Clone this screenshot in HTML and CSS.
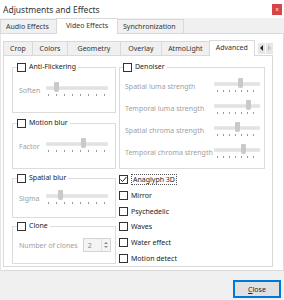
FILE: index.html
```html
<!DOCTYPE html>
<html lang="en">
<head>
<meta charset="UTF-8">
<title>Adjustments and Effects</title>
<link rel="stylesheet" href="styles.css">
</head>
<body>
  <div class="window">
    <div class="titlebar">
      <span class="title">Adjustments and Effects</span>
      <span class="close-x">x</span>
    </div>

    <div class="tabs outer-tabs">
      <span class="tab">Audio Effects</span>
      <span class="tab active">Video Effects</span>
      <span class="tab">Synchronization</span>
    </div>

    <div class="outer-pane">
      <div class="tabs inner-tabs">
        <span class="tab">Crop</span>
        <span class="tab">Colors</span>
        <span class="tab">Geometry</span>
        <span class="tab">Overlay</span>
        <span class="tab">AtmoLight</span>
        <span class="tab active">Advanced</span>
        <span class="scroll-btns">
          <span class="sbtn"><span class="arr-left"></span></span>
          <span class="sbtn"><span class="arr-right"></span></span>
        </span>
      </div>

      <div class="inner-pane">
        <div class="col-left">
          <fieldset class="group g-flicker">
            <legend><span class="cb"></span>Anti-Flickering</legend>
            <div class="row">
              <span class="lbl">Soften</span>
              <div class="slider"><span class="thumb" style="left: 8px"></span></div>
            </div>
          </fieldset>

          <fieldset class="group g-motion">
            <legend><span class="cb"></span>Motion blur</legend>
            <div class="row">
              <span class="lbl">Factor</span>
              <div class="slider"><span class="thumb" style="left: 35px"></span></div>
            </div>
          </fieldset>

          <fieldset class="group g-spatial">
            <legend><span class="cb"></span>Spatial blur</legend>
            <div class="row">
              <span class="lbl">Sigma</span>
              <div class="slider"><span class="thumb" style="left: 12px"></span></div>
            </div>
          </fieldset>

          <fieldset class="group g-clone">
            <legend><span class="cb"></span>Clone</legend>
            <div class="row">
              <span class="lbl">Number of clones</span>
              <div class="spin">
                <span class="spin-val">2</span>
                <span class="spin-btns"><span class="up"></span><span class="down"></span></span>
              </div>
            </div>
          </fieldset>
        </div>

        <div class="col-right">
          <fieldset class="group g-denoise">
            <legend><span class="cb"></span>Denoiser</legend>
            <div class="drow">
              <span class="lbl">Spatial luma strength</span>
              <div class="slider short"><span class="thumb" style="left: 24px"></span></div>
            </div>
            <div class="drow">
              <span class="lbl">Temporal luma strength</span>
              <div class="slider short"><span class="thumb" style="left: 32px"></span></div>
            </div>
            <div class="drow">
              <span class="lbl">Spatial chroma strength</span>
              <div class="slider short"><span class="thumb" style="left: 21px"></span></div>
            </div>
            <div class="drow">
              <span class="lbl">Temporal chroma strength</span>
              <div class="slider short"><span class="thumb" style="left: 27px"></span></div>
            </div>
          </fieldset>

          <div class="checks">
            <div class="check">
              <span class="cb checked">
                <svg width="9" height="9" viewBox="0 0 9 9"><path d="M1.5 4.5 L3.5 6.5 L7.5 2" fill="none" stroke="#222" stroke-width="1"/></svg>
              </span>
              <span class="focus">Anaglyph 3D</span>
            </div>
            <div class="check"><span class="cb"></span>Mirror</div>
            <div class="check"><span class="cb"></span>Psychedelic</div>
            <div class="check"><span class="cb"></span>Waves</div>
            <div class="check"><span class="cb"></span>Water effect</div>
            <div class="check"><span class="cb"></span>Motion detect</div>
          </div>
        </div>
      </div>
    </div>

    <div class="footer">
      <button class="btn-close"><u>C</u>lose</button>
    </div>
  </div>
</body>
</html>
```

FILE: styles.css
```css
body {
  margin: 0;
  padding: 0;
  font-family: "Noto Sans", "Open Sans", sans-serif;
  font-size: 7px;
  color: #2a2a2a;
  background: #fff;
}
.window {
  width: 284px;
  height: 300px;
  display: flex;
  flex-direction: column;
  background: #fff;
  overflow: hidden;
}

/* タイトルバー */
.titlebar {
  height: 18px;
  display: flex;
  align-items: center;
  justify-content: space-between;
  padding: 0 2px 0 3px;
  box-sizing: border-box;
}
.title {
  font-size: 8.5px;
  color: #333;
}
.close-x {
  width: 10px;
  height: 11px;
  background: #d9434a;
  color: #fff;
  font-size: 6px;
  line-height: 10px;
  text-align: center;
}

/* タブ */
.tabs {
  display: flex;
  align-items: flex-end;
}
.tab {
  height: 13px;
  line-height: 13px;
  padding: 0 5px;
  border: 1px solid #d9d9d9;
  border-bottom: none;
  margin-right: -1px;
  background: #f0f0f0;
  color: #333;
  white-space: nowrap;
}
.tab.active {
  background: #fff;
  height: 15px;
  line-height: 14px;
  position: relative;
  z-index: 1;
  margin-bottom: -1px;
}
.outer-tabs {
  height: 15px;
  background: #f0f0f0;
}
.outer-tabs .tab:nth-child(1) { width: 45px; }
.outer-tabs .tab:nth-child(2) { width: 50px; text-align: center; }
.outer-tabs .tab:nth-child(3) { width: 55px; }

.outer-pane {
  height: 238px;
  box-sizing: border-box;
  border: 1px solid #d9d9d9;
  border-left-color: #e6e6e6;
  padding: 7px 10px 0 2px;
}
.inner-tabs {
  height: 14px;
}
.inner-tabs .tab { padding: 0 4px; text-align: center; }
.inner-tabs .tab:nth-child(1) { width: 20px; }
.inner-tabs .tab:nth-child(2) { width: 27px; }
.inner-tabs .tab:nth-child(3) { width: 44px; }
.inner-tabs .tab:nth-child(4) { width: 33px; }
.inner-tabs .tab:nth-child(5) { width: 39px; }
.inner-tabs .tab:nth-child(6) { width: 37px; }
.scroll-btns {
  display: flex;
  gap: 1px;
  margin-left: 4px;
  align-self: center;
}
.sbtn {
  width: 7px;
  height: 11px;
  background: #e6e6e6;
  display: flex;
  align-items: center;
  justify-content: center;
}
.arr-left {
  border-right: 3px solid #222;
  border-top: 3px solid transparent;
  border-bottom: 3px solid transparent;
}
.arr-right {
  border-left: 3px solid #c4c4c4;
  border-top: 3px solid transparent;
  border-bottom: 3px solid transparent;
}

.inner-pane {
  height: 212px;
  box-sizing: border-box;
  border: 1px solid #d9d9d9;
  display: flex;
  gap: 3px;
  padding: 6px 0 0 8px;
}
.col-left {
  width: 104px;
  display: flex;
  flex-direction: column;
}
.col-right {
  width: 146px;
  display: flex;
  flex-direction: column;
}

/* グループボックス */
.group {
  margin: 0;
  padding: 0 0 0 6px;
  border: 1px solid #dcdcdc;
  box-sizing: border-box;
  min-width: 0;
}
.group legend {
  padding: 0 2px 0 0;
  margin-left: -2px;
  height: 10px;
  line-height: 10px;
  display: flex;
  align-items: center;
  color: #222;
}
.g-flicker { height: 51px; }
.g-motion { height: 51px; margin-top: 5px; }
.g-spatial { height: 45px; margin-top: 4px; }
.g-clone { height: 43px; margin-top: 3px; }
.g-denoise { height: 107px; padding-left: 5px; }

.cb {
  width: 9px;
  height: 9px;
  box-sizing: border-box;
  border: 1px solid #333;
  background: #fff;
  margin-right: 3px;
  flex: none;
  display: inline-block;
}
.cb.checked svg {
  display: block;
  margin: -1px;
}

.row {
  display: flex;
  align-items: center;
  height: 24px;
  margin-top: 6px;
}
.g-spatial .row { margin-top: 4px; height: 22px; }
.g-clone .row { margin-top: 2px; height: 24px; }
.lbl {
  color: #a0a0a0;
  white-space: nowrap;
}
.row .lbl { width: 27px; }
.g-clone .row .lbl { width: auto; margin-right: 5px; }

/* スライダー */
.slider {
  position: relative;
  width: 62px;
  height: 18px;
  background:
    repeating-linear-gradient(to right, #9a9a9a 0 1px, transparent 1px 8px) 2px 13px / 57px 2px no-repeat;
}
.slider::before {
  content: "";
  position: absolute;
  left: 0;
  right: 0;
  top: 5px;
  height: 2px;
  background: #e2e2e2;
  border: 1px solid #e8e8e8;
}
.slider.short {
  width: 46px;
  background:
    repeating-linear-gradient(to right, #9a9a9a 0 1px, transparent 1px 6px) 3px 13px / 40px 2px no-repeat;
}
.thumb {
  position: absolute;
  top: 1px;
  width: 5px;
  height: 10px;
  background: #c9c9c9;
  border-radius: 1px 1px 2px 2px;
}

.drow {
  display: flex;
  align-items: center;
  justify-content: space-between;
  height: 22px;
  padding-right: 4px;
}
.drow:first-of-type { margin-top: 3px; }

/* スピンボックス */
.spin {
  width: 28px;
  height: 14px;
  box-sizing: border-box;
  border: 1px solid #d4d4d4;
  display: flex;
  align-items: center;
  justify-content: space-between;
  background: #f4f4f4;
}
.spin-val {
  color: #8a8a8a;
  padding-left: 4px;
}
.spin-btns {
  width: 8px;
  height: 12px;
  display: flex;
  flex-direction: column;
  align-items: center;
  justify-content: center;
  gap: 2px;
  border-left: 1px solid #e0e0e0;
}
.spin-btns .up {
  border-bottom: 2px solid #888;
  border-left: 2px solid transparent;
  border-right: 2px solid transparent;
}
.spin-btns .down {
  border-top: 2px solid #888;
  border-left: 2px solid transparent;
  border-right: 2px solid transparent;
}

/* チェックボックス一覧 */
.checks {
  display: flex;
  flex-direction: column;
  margin-top: 3px;
}
.check {
  display: flex;
  align-items: center;
  height: 15.7px;
  color: #222;
}
.focus {
  border: 1px dotted #555;
  padding: 0 1px;
  line-height: 9px;
}

/* フッター */
.footer {
  flex: 1;
  background: #f0f0f0;
  display: flex;
  justify-content: flex-end;
  align-items: flex-start;
  padding: 9px 3px 0 0;
}
.btn-close {
  width: 48px;
  height: 18px;
  font-family: inherit;
  font-size: 7px;
  background: #e1e1e1;
  border: 1px solid #0078d7;
  box-shadow: inset 0 0 0 1px #0078d7;
  padding: 0;
  color: #222;
}
```
